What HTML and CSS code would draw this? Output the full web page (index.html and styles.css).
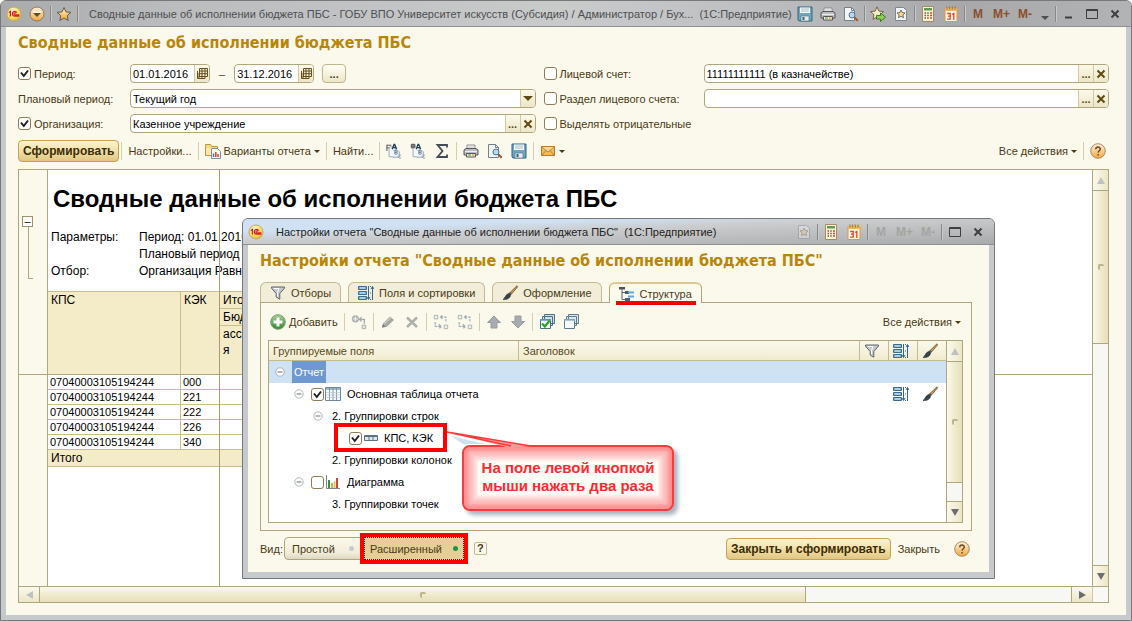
FILE: index.html
```html
<!DOCTYPE html>
<html lang="ru">
<head>
<meta charset="utf-8">
<title>Сводные данные об исполнении бюджета ПБС</title>
<link rel="stylesheet" href="styles.css">
</head>
<body>
<svg class="sprite" aria-hidden="true">
  <defs>
    <radialGradient id="g-yellow" cx=".4" cy=".3" r=".8"><stop offset="0" stop-color="#fffbd8"/><stop offset=".6" stop-color="#fbdc55"/><stop offset="1" stop-color="#dba42a"/></radialGradient>
    <linearGradient id="g-amber" x1="0" y1="0" x2="0" y2="1"><stop offset="0" stop-color="#fff3dc"/><stop offset="1" stop-color="#f0a63c"/></linearGradient>
    <linearGradient id="g-star" x1="0" y1="0" x2="0" y2="1"><stop offset="0" stop-color="#fff0c4"/><stop offset="1" stop-color="#f3a93f"/></linearGradient>
    <linearGradient id="g-green" x1="0" y1="0" x2="0" y2="1"><stop offset="0" stop-color="#a9cf98"/><stop offset="1" stop-color="#2f8a2c"/></linearGradient>
  </defs>
  <symbol id="i-1c" viewBox="0 0 16 16"><circle cx="8" cy="8" r="7" fill="url(#g-yellow)" stroke="#c9a868"/><path d="M2.8 6.6 4.4 5.5V10.6M10.800 6.600A2.400 2.400 0 1 0 8.800 10.200H13.400M9.800 7.400A1 1 0 1 0 8.800 8.800H13.400" fill="none" stroke="#d8232a" stroke-width="1.200"/></symbol>
  <symbol id="i-menu" viewBox="0 0 16 16"><circle cx="8" cy="8" r="7" fill="url(#g-amber)" stroke="#8d7a60"/><path d="M4 5.500h8v1.500H4z" fill="#fff"/><path d="M4 7h8L8 11z" fill="#6b4a1c"/></symbol>
  <symbol id="i-star" viewBox="0 0 16 16"><path d="M8 1.500l2 4.400 4.800.5-3.600 3.200 1 4.900L8 12l-4.200 2.500 1-4.900L1.200 6.400 6 5.900z" fill="url(#g-star)" stroke="#6c5a43" stroke-linejoin="round"/></symbol>
  <symbol id="i-staradd" viewBox="0 0 16 16"><path d="M7 .8l1.900 4.300 4.600.5-3.400 3.100 1 4.600L7 11l-4 2.300 1-4.600L.6 5.600 5.200 5.100z" fill="#f7ecc9" stroke="#75664c" stroke-linejoin="round"/><path d="M6.500 9.500h4V7l5 4.200-5 4.300V13h-4z" fill="#8fce5b" stroke="#3b7a26"/></symbol>
  <symbol id="i-starpage" viewBox="0 0 16 16"><path d="M2.500 1.500h8l3 3v10h-11z" fill="#eef3f7" stroke="#7b8791"/><path d="M8 4l1.200 2.600 2.800.3-2.100 1.900.6 2.900L8 10.300l-2.500 1.400.6-2.900L4 6.900l2.800-.3z" fill="#fbd98d" stroke="#5d5240" stroke-width=".8"/></symbol>
  <symbol id="i-save" viewBox="0 0 16 16"><path d="M1 1h14v14H2l-1-1z" fill="#6ea6bf" stroke="#35647d"/><path d="M3 1.500h10V7H3z" fill="#f4fafc"/><path d="M4 3h8M4 5h8" stroke="#a7bac5"/><path d="M4 10h8v5H4z" fill="#e5eaec" stroke="#4a7185" stroke-width=".6"/><path d="M5.500 11h2v3h-2z" fill="#35647d"/></symbol>
  <symbol id="i-print" viewBox="0 0 16 16"><path d="M4 2h8v5H4z" fill="#fff" stroke="#8b8b8b"/><path d="M5 4h6" stroke="#bbb"/><path d="M1 7l2-1.500h10L15 7v5H1z" fill="#b9bdc2" stroke="#54575b"/><path d="M2 8.500h12" stroke="#eee"/><path d="M3.500 10.500h9V14h-9z" fill="#f2eedd" stroke="#565656"/><path d="M5 12h3" stroke="#3c9c3c"/><path d="M9 12h2.500" stroke="#d58b22"/></symbol>
  <symbol id="i-preview" viewBox="0 0 16 16"><path d="M1.500 1.500h7l3 3v10h-10z" fill="#f3f6f8" stroke="#75818a"/><path d="M8.500 1.500v3h3" fill="none" stroke="#75818a"/><circle cx="9" cy="9" r="3" fill="#b9d8ee" stroke="#55788f"/><path d="M11.300 11.300l3.500 3.500" stroke="#9b5a35" stroke-width="2"/></symbol>
  <symbol id="i-calc" viewBox="0 0 16 16"><path d="M2.500.5h11v15h-11z" fill="#fcf3d7" stroke="#a58a63"/><path d="M4 2h8v2.500H4z" fill="#5f9a4f"/><path d="M4.500 7h1.500M7.200 7h1.500M4.500 9.500h1.500M7.200 9.500h1.500M4.500 12h1.500M7.200 12h1.500" stroke="#6b5a44" stroke-width="1.500"/><path d="M10 7h2M10 9.500h2M10 12h2" stroke="#d44b35" stroke-width="1.500"/></symbol>
  <symbol id="i-cal" viewBox="0 0 16 16"><path d="M2 2.500h12v13H2z" fill="#fdf4e4" stroke="#d99a4b"/><path d="M2 2h12v3H2z" fill="#efb460"/><path d="M4 .5v3M6.700.5v3M9.300.5v3M12 .5v3" stroke="#9a7134"/><path d="M4.200 7.500h3v5.700h-3M5 10.200h2.200M9.200 8.500l1.600-1v6.500" fill="none" stroke="#e0482c" stroke-width="1.300"/></symbol>
  <symbol id="i-grid" viewBox="0 0 12 12"><path d="M3.500.5h8v8h-8zM3.500 3h8M3.500 5.700h8M6 .5v8M9 .5v8M1.500 3v7.500H9M3 8.500v2M6 8.500v2M1.500 6h2M1.500 8.300H4M9 8.500v2" fill="none" stroke="#65501d"/></symbol>
  <symbol id="i-folder" viewBox="0 0 16 16"><path d="M.5 3.500V1.500h5l1.500 2h5.500v9H.5z" fill="#f6d983" stroke="#c09342"/><path d="M1 5h11v7H1z" fill="#fbe9ad"/><path d="M6.500 5.500h6l3 3v7h-9z" fill="#f9fbfd" stroke="#7992a8"/><path d="M8.500 14v-3.500" stroke="#4b77b5" stroke-width="1.500"/><path d="M10.800 14V9" stroke="#d14334" stroke-width="1.500"/><path d="M13 14v-3" stroke="#d14334" stroke-width="1.500"/></symbol>
  <symbol id="i-expand" viewBox="0 0 18 18"><path d="M1 2.500h5M1 5.500h3M1 2v7" fill="none" stroke="#444"/><path d="M3.500 4.500h7v11h-7z" fill="#f4f8fb" stroke="#8fa3b2"/><path d="M8.500 8.500h5l1.500 1.500v6H7.500" fill="#eaf1f7" stroke="#8fa3b2"/><path d="M7 7l2-5.500h.8L12 7M7.800 5.200h3.400" fill="none" stroke="#27405c" stroke-width="1.500"/><path d="M10 12.500V8.800h1.700a.9.900 0 0 1 0 1.800H10h1.900a1 1 0 0 1 0 2z" fill="none" stroke="#6d8496"/><path d="M17 14a1.800 1.800 0 1 0 0 2.500" fill="none" stroke="#8a9ba8"/></symbol>
  <symbol id="i-collapse" viewBox="0 0 18 18"><path d="M1.500 1.500h4v4h-4zM3.500 1v5M1 3.500h5" fill="none" stroke="#444"/><path d="M3.500 6.500v9h7v-11" fill="#f4f8fb" stroke="#8fa3b2"/><path d="M8.500 8.500h5l1.500 1.500v6H7.500" fill="#eaf1f7" stroke="#8fa3b2"/><path d="M7 7l2-5.500h.8L12 7M7.800 5.200h3.400" fill="none" stroke="#27405c" stroke-width="1.500"/><path d="M10 12.500V8.800h1.700a.9.900 0 0 1 0 1.800H10h1.900a1 1 0 0 1 0 2z" fill="none" stroke="#6d8496"/><path d="M17 14a1.800 1.800 0 1 0 0 2.500" fill="none" stroke="#8a9ba8"/></symbol>
  <symbol id="i-sum" viewBox="0 0 16 16"><path d="M13 4.500V2H3.500L8.500 8l-5 6H13v-2.500" fill="none" stroke="#454b57" stroke-width="1.800"/></symbol>
  <symbol id="i-mail" viewBox="0 0 16 16"><path d="M1.500 3.500h13v9h-13z" fill="#f5b95a" stroke="#bd7c23"/><path d="M1.500 3.500L8 9l6.500-5.500M1.500 12.500L6 7.500M14.500 12.500L10 7.500" fill="none" stroke="#c5822a"/><path d="M2.500 4L8 8.300 13.500 4z" fill="#fbd792"/></symbol>
  <symbol id="i-help" viewBox="0 0 16 16"><circle cx="8" cy="8" r="7.300" fill="url(#g-amber)" stroke="#a98c66"/><path d="M5.700 6.300C5.700 3.300 10.400 3.400 10.300 6.100 10.200 7.700 8.200 7.800 8.100 9.600M8.100 10.900v1.500" fill="none" stroke="#6b4a28" stroke-width="1.500"/></symbol>
  <symbol id="i-filter" viewBox="0 0 16 16"><path d="M1.500 2h13v1.200L9.800 8.500v5.700L6.200 12V8.500L1.500 3.200z" fill="#c3c8cd" stroke="#5e6469"/><path d="M4 3.500h5L7.500 7.500v4" fill="none" stroke="#fff"/></symbol>
  <symbol id="i-sort" viewBox="0 0 16 16"><path d="M.5 1.500h8v3h-8zM.5 6.500h8v3h-8zM.5 11.500h8v3h-8z" fill="#7fb0d6" stroke="#3f6c8e"/><path d="M2 3h5M2 8h5M2 13h5" stroke="#d6e8f4"/><path d="M10.500 1v13M9 12l1.500 2.500L12 12M14.500 15V2M13 4l1.500-2.500L16 4" fill="none" stroke="#33678f"/><path d="M12 1.500h1M12 14.500h1M12 8h1" stroke="#33678f"/></symbol>
  <symbol id="i-brush" viewBox="0 0 16 16"><path d="M15 .8L8 7.500l1.500 1.500L15.500 2z" fill="#c89d57" stroke="#6e5023" stroke-width=".8"/><path d="M8 7l2 2-1.800 1.500L6.500 8.800z" fill="#555"/><path d="M6.500 8.500l2 2C8 13 5 15 1 14.500 3.500 13 3 10 6.500 8.500z" fill="#37414a" stroke="#1f272e" stroke-width=".6"/></symbol>
  <symbol id="i-tree" viewBox="0 0 16 16"><path d="M0 1h6v2.500H0z" fill="#4a5159"/><path d="M3 3.500v10h3M3 6.500h3" fill="none" stroke="#56616b"/><path d="M6 5h4v3H6zM6 12h5v3H6z" fill="#4a5f70"/><path d="M9 6.500h6M9 10.500h6" stroke="#65a7d2" stroke-width="2"/></symbol>
  <symbol id="i-add" viewBox="0 0 16 16"><circle cx="8" cy="8" r="7.300" fill="url(#g-green)" stroke="#7c9a76"/><path d="M6.500 3.500h3v3h3v3h-3v3h-3v-3h-3v-3h3z" fill="#fff"/></symbol>
  <symbol id="i-group" viewBox="0 0 18 18"><circle cx="5" cy="5.500" r="4" fill="#b0b4b0"/><path d="M5 3v5M2.500 5.500h5" stroke="#eee" stroke-width="1.300"/><path d="M10 6h5v5M12 3.500L9.500 6 12 8.500" fill="none" stroke="#a4aaab" stroke-width="1.500"/><path d="M12.500 12.500h4v4h-4z" fill="#e3e4df" stroke="#a4a8a7"/></symbol>
  <symbol id="i-pen" viewBox="0 0 16 16"><path d="M2 13.500L3 9.500 10 2.500l4 3.500-7.500 7z" fill="#a4a69f"/><path d="M4 10l7-6.500" stroke="#c5c7c0" stroke-width="1.500"/><path d="M2 13.500l3.500-.7-2.500-2.500z" fill="#777"/></symbol>
  <symbol id="i-del" viewBox="0 0 16 16"><path d="M3 3.500l10 9.500M13 3.500L3 13" stroke="#aeb0ab" stroke-width="2.500"/></symbol>
  <symbol id="i-moveup" viewBox="0 0 18 18"><path d="M1.500 1.500h4v4h-4zM12.500 12.500h4v4h-4z" fill="#edf0ec" stroke="#a9aeae"/><path d="M8.500 3.500h6V9M10.500 1.500l-2.500 2 2.500 2M2.500 9v5h6M6.500 11.500l3 2.500-3 2.500" fill="none" stroke="#9cabb3" stroke-width="1.300" stroke-dasharray="3 1"/></symbol>
  <symbol id="i-up" viewBox="0 0 16 16"><path d="M8 2l6.500 6.500H11V14H5V8.500H1.500z" fill="#a8acb1" stroke="#989ca1"/></symbol>
  <symbol id="i-down" viewBox="0 0 16 16"><path d="M8 14L1.500 7.500H5V2h6v5.500h3.500z" fill="#a8acb1" stroke="#989ca1"/></symbol>
  <symbol id="i-checkall" viewBox="0 0 16 16"><path d="M5.500.5h10v9h-10zM3.500 2.500h10v9h-10z" fill="#cfe2ea" stroke="#4b7284"/><path d="M1.500 5.500h10v9h-10z" fill="#f2f8fa" stroke="#4b7284"/><path d="M1.500 5.500h10v1.500h-10z" fill="#89b3c6"/><path d="M3 9.500l2.800 3 5-6" fill="none" stroke="#31a02e" stroke-width="2.300"/></symbol>
  <symbol id="i-uncheckall" viewBox="0 0 16 16"><path d="M5.500.5h10v9h-10zM3.500 2.500h10v9h-10z" fill="#dbe8ef" stroke="#5e7c8c"/><path d="M1.500 5.500h10v9h-10z" fill="#f7fafb" stroke="#5e7c8c"/><path d="M1.500 5.500h10v1.500h-10z" fill="#a6c5d6"/></symbol>
  <symbol id="i-table" viewBox="0 0 16 16"><path d="M.5 1.500h15v13H.5z" fill="#f6f9fb" stroke="#70899a"/><path d="M1 2h14v2H1z" fill="#9db8c9"/><path d="M4.500 2v12M8 2v12M11.500 2v12" stroke="#70899a" stroke-width=".8"/><path d="M1 6.500h14M1 9h14M1 11.500h14" stroke="#b3c0ca" stroke-width=".6"/></symbol>
  <symbol id="i-fields" viewBox="0 0 14 8"><path d="M.5 1.500h13v5H.5z" fill="#dfe8ef" stroke="#5d7484"/><path d="M1 2h12v1H1z" fill="#5d7484"/><path d="M5 1v6M9 1v6" stroke="#5d7484"/></symbol>
  <symbol id="i-chart" viewBox="0 0 16 16"><path d="M1.500 1v13.500H15" fill="none" stroke="#7d8791"/><path d="M3 6h2v8H3z" fill="#3f8a4e"/><path d="M6 9h2v5H6z" fill="#b4c34c"/><path d="M8.500 7.500h2V14h-2z" fill="#e7c55f"/><path d="M11 4h2v10h-2z" fill="#c74a3f"/></symbol>
  <symbol id="i-minus" viewBox="0 0 10 10"><circle cx="5" cy="5" r="4.200" fill="#fff" stroke="#a9aeb1" stroke-width=".9"/><path d="M2.500 5h5" stroke="#6b7276"/></symbol>
  <symbol id="i-x" viewBox="0 0 10 10"><path d="M1.500 1.500l7 7M8.500 1.500l-7 7" stroke="currentColor" stroke-width="2"/></symbol>
  <symbol id="i-max" viewBox="0 0 12 12"><path d="M.5 1.500h11v9H.5zM.5 2.500h11" fill="none" stroke="currentColor"/></symbol>
  <symbol id="i-min" viewBox="0 0 12 12"><path d="M2 9.500h7" stroke="currentColor" stroke-width="2"/></symbol>
</svg>

<div class="window">
  <header class="titlebar">
    <button class="tb" aria-label="Меню 1С"><svg class="ic"><use href="#i-1c"/></svg></button>
    <button class="tb" aria-label="Главное меню"><svg class="ic"><use href="#i-menu"/></svg></button>
    <span class="tsep"></span>
    <button class="tb" aria-label="Избранное"><svg class="ic"><use href="#i-star"/></svg></button>
    <span class="tsep"></span>
    <span class="caption">Сводные данные об исполнении бюджета ПБС - ГОБУ ВПО Университет искусств (Субсидия) / Администратор / Бух...&nbsp; (1С:Предприятие)</span>
    <button class="tb" aria-label="Сохранить"><svg class="ic"><use href="#i-save"/></svg></button>
    <button class="tb" aria-label="Печать"><svg class="ic"><use href="#i-print"/></svg></button>
    <button class="tb" aria-label="Просмотр"><svg class="ic"><use href="#i-preview"/></svg></button>
    <span class="tsep"></span>
    <button class="tb" aria-label="Добавить в избранное"><svg class="ic"><use href="#i-staradd"/></svg></button>
    <button class="tb" aria-label="Ссылки"><svg class="ic"><use href="#i-starpage"/></svg></button>
    <span class="tsep"></span>
    <button class="tb" aria-label="Калькулятор"><svg class="ic"><use href="#i-calc"/></svg></button>
    <button class="tb" aria-label="Календарь"><svg class="ic"><use href="#i-cal"/></svg></button>
    <span class="tsep"></span>
    <button class="tb mem">M</button>
    <button class="tb mem">M+</button>
    <button class="tb mem">M-</button>
    <button class="tb more" aria-label="Ещё"><i class="caret wide"></i></button>
    <span class="tsep"></span>
    <button class="tb win" aria-label="Свернуть"><svg class="ic12"><use href="#i-min"/></svg></button>
    <button class="tb win" aria-label="Развернуть"><svg class="ic12"><use href="#i-max"/></svg></button>
    <button class="tb win" aria-label="Закрыть окно"><svg class="ic10"><use href="#i-x"/></svg></button>
  </header>

  <main class="content">
    <h1 class="heading">Сводные данные об исполнении бюджета ПБС</h1>

    <form class="params">
      <label class="lbl"><input type="checkbox" class="check" checked>Период:</label>
      <div class="period">
        <span class="field date"><input type="text" value="01.01.2016" aria-label="Начало периода"><button type="button" class="fb" aria-label="Выбрать дату начала"><svg class="ic12"><use href="#i-grid"/></svg></button></span>
        <span>–</span>
        <span class="field date"><input type="text" value="31.12.2016" aria-label="Конец периода"><button type="button" class="fb" aria-label="Выбрать дату конца"><svg class="ic12"><use href="#i-grid"/></svg></button></span>
        <button type="button" class="dots">...</button>
      </div>
      <label class="lbl second"><input type="checkbox" class="check">Лицевой счет:</label>
      <span class="field"><input type="text" value="11111111111 (в казначействе)" aria-label="Лицевой счет"><button type="button" class="fb">...</button><button type="button" class="fb" aria-label="Очистить"><svg class="ic10"><use href="#i-x"/></svg></button></span>

      <label class="lbl" for="plan">Плановый период:</label>
      <span class="field"><select id="plan"><option>Текущий год</option></select><span class="fb"><i class="caret big"></i></span></span>
      <label class="lbl second"><input type="checkbox" class="check">Раздел лицевого счета:</label>
      <span class="field"><input type="text" value="" aria-label="Раздел лицевого счета"><button type="button" class="fb">...</button><button type="button" class="fb" aria-label="Очистить"><svg class="ic10"><use href="#i-x"/></svg></button></span>

      <label class="lbl"><input type="checkbox" class="check" checked>Организация:</label>
      <span class="field"><input type="text" value="Казенное учреждение" aria-label="Организация"><button type="button" class="fb">...</button><button type="button" class="fb" aria-label="Очистить"><svg class="ic10"><use href="#i-x"/></svg></button></span>
      <label class="lbl second"><input type="checkbox" class="check">Выделять отрицательные</label>
    </form>

    <div class="toolbar">
      <button class="primary">Сформировать</button>
      <span class="sep"></span>
      <button class="cmd">Настройки...</button>
      <span class="sep"></span>
      <button class="cmd"><svg class="ic"><use href="#i-folder"/></svg>Варианты отчета<i class="caret"></i></button>
      <span class="sep"></span>
      <button class="cmd">Найти...</button>
      <span class="sep"></span>
      <button class="cmd" aria-label="Развернуть группы"><svg class="ic"><use href="#i-expand"/></svg></button>
      <button class="cmd" aria-label="Свернуть группы"><svg class="ic"><use href="#i-collapse"/></svg></button>
      <button class="cmd" aria-label="Сумма"><svg class="ic"><use href="#i-sum"/></svg></button>
      <span class="sep"></span>
      <button class="cmd" aria-label="Печать отчета"><svg class="ic"><use href="#i-print"/></svg></button>
      <button class="cmd" aria-label="Предварительный просмотр"><svg class="ic"><use href="#i-preview"/></svg></button>
      <button class="cmd" aria-label="Сохранить отчет"><svg class="ic"><use href="#i-save"/></svg></button>
      <span class="sep"></span>
      <button class="cmd" aria-label="Отправить"><svg class="ic"><use href="#i-mail"/></svg><i class="caret"></i></button>
      <button class="cmd push">Все действия<i class="caret"></i></button>
      <span class="sep"></span>
      <button class="cmd" aria-label="Справка"><svg class="ic"><use href="#i-help"/></svg></button>
    </div>

    <section class="sheet">
      <div class="view">
        <div class="pane frozen">
          <div class="gutter"><button class="fold" aria-label="Свернуть группу">–</button><span class="bracket"></span></div>
          <div class="cells">
            <h2 class="report">Сводные данные об исполнении бюджета ПБС</h2>
            <dl class="info">
              <dt>Параметры:</dt><dd>Период: 01.01.2016</dd>
              <dd class="cont">Плановый период</dd>
              <dt>Отбор:</dt><dd>Организация Равно</dd>
            </dl>
            <table class="data head">
              <colgroup><col class="c1"><col class="c2"><col class="c3"></colgroup>
              <tr><th rowspan="3">КПС</th><th rowspan="3">КЭК</th><th>Итого</th></tr>
              <tr><th>Бюджетные</th></tr>
              <tr><th class="tall">ассиг<br>я</th></tr>
            </table>
          </div>
        </div>
        <div class="pane rest">
          <div class="gutter"></div>
          <div class="cells">
            <table class="data">
              <colgroup><col class="c1"><col class="c2"><col class="c3"></colgroup>
              <tr><td>07040003105194244</td><td>000</td><td></td></tr>
              <tr><td>07040003105194244</td><td>221</td><td></td></tr>
              <tr><td>07040003105194244</td><td>222</td><td></td></tr>
              <tr><td>07040003105194244</td><td>226</td><td></td></tr>
              <tr><td>07040003105194244</td><td>340</td><td></td></tr>
              <tr><th colspan="2">Итого</th><th></th></tr>
            </table>
          </div>
        </div>
        <span class="freeze"></span>
      </div>
      <div class="vscroll">
        <button class="arrow" aria-label="Вверх"><i class="tri up off"></i></button>
        <span class="thumb tv"></span><span class="track kv"></span>
        <button class="arrow" aria-label="Вниз"><i class="tri down"></i></button>
      </div>
      <div class="hscroll">
        <button class="arrow" aria-label="Влево"><i class="tri left off"></i></button>
        <span class="thumb th"></span><span class="track kh"></span>
        <button class="arrow" aria-label="Вправо"><i class="tri right"></i></button>
      </div>
      <span class="corner"></span>
    </section>
  </main>
</div>

<div class="dialog" role="dialog" aria-labelledby="dlg-title">
  <header class="titlebar">
    <button class="tb" aria-label="Меню 1С"><svg class="ic"><use href="#i-1c"/></svg></button>
    <span class="caption">Настройки отчета "Сводные данные об исполнении бюджета ПБС"&nbsp; (1С:Предприятие)</span>
    <button class="tb faded" aria-label="Ссылки"><svg class="ic"><use href="#i-starpage"/></svg></button>
    <span class="tsep"></span>
    <button class="tb" aria-label="Калькулятор"><svg class="ic"><use href="#i-calc"/></svg></button>
    <button class="tb" aria-label="Календарь"><svg class="ic"><use href="#i-cal"/></svg></button>
    <span class="tsep"></span>
    <button class="tb mem">M</button>
    <button class="tb mem">M+</button>
    <button class="tb mem">M-</button>
    <span class="tsep"></span>
    <button class="tb win" aria-label="Развернуть"><svg class="ic12"><use href="#i-max"/></svg></button>
    <button class="tb win" aria-label="Закрыть окно"><svg class="ic10"><use href="#i-x"/></svg></button>
  </header>
  <div class="dbody">
    <h2 class="heading" id="dlg-title">Настройки отчета "Сводные данные об исполнении бюджета ПБС"</h2>
    <nav class="tabs">
      <button class="tab"><svg class="ic"><use href="#i-filter"/></svg>Отборы</button>
      <button class="tab"><svg class="ic"><use href="#i-sort"/></svg>Поля и сортировки</button>
      <button class="tab"><svg class="ic"><use href="#i-brush"/></svg>Оформление</button>
      <button class="tab active"><svg class="ic"><use href="#i-tree"/></svg>Структура</button>
    </nav>
    <div class="panel">
      <div class="toolbar">
        <button class="cmd"><svg class="ic"><use href="#i-add"/></svg>Добавить</button>
        <span class="sep"></span>
        <button class="cmd" aria-label="Сгруппировать"><svg class="ic"><use href="#i-group"/></svg></button>
        <span class="sep"></span>
        <button class="cmd" aria-label="Изменить"><svg class="ic"><use href="#i-pen"/></svg></button>
        <button class="cmd" aria-label="Удалить"><svg class="ic"><use href="#i-del"/></svg></button>
        <span class="sep"></span>
        <button class="cmd" aria-label="Поднять уровень"><svg class="ic"><use href="#i-moveup"/></svg></button>
        <button class="cmd" aria-label="Опустить уровень"><svg class="ic"><use href="#i-moveup"/></svg></button>
        <span class="sep"></span>
        <button class="cmd" aria-label="Переместить вверх"><svg class="ic"><use href="#i-up"/></svg></button>
        <button class="cmd" aria-label="Переместить вниз"><svg class="ic"><use href="#i-down"/></svg></button>
        <span class="sep"></span>
        <button class="cmd" aria-label="Отметить все"><svg class="ic"><use href="#i-checkall"/></svg></button>
        <button class="cmd" aria-label="Снять отметки"><svg class="ic"><use href="#i-uncheckall"/></svg></button>
        <button class="cmd push">Все действия<i class="caret"></i></button>
      </div>
      <div class="treebox">
        <div class="treeview">
          <table class="tree">
            <colgroup><col class="t1"><col class="t2"><col class="t3"><col class="t3"><col class="t3"></colgroup>
            <thead><tr><th>Группируемые поля</th><th>Заголовок</th><th><svg class="ic"><use href="#i-filter"/></svg></th><th><svg class="ic"><use href="#i-sort"/></svg></th><th><svg class="ic"><use href="#i-brush"/></svg></th></tr></thead>
            <tbody>
              <tr class="sel"><td><div class="node l0"><svg class="ic10"><use href="#i-minus"/></svg><span class="mark">Отчет</span></div></td><td></td><td></td><td></td><td></td></tr>
              <tr><td><div class="node l1"><svg class="ic10"><use href="#i-minus"/></svg><label class="item"><input type="checkbox" class="check" checked><svg class="ic"><use href="#i-table"/></svg><span>Основная таблица отчета</span></label></div></td><td></td><td></td><td class="c"><svg class="ic"><use href="#i-sort"/></svg></td><td class="c"><svg class="ic"><use href="#i-brush"/></svg></td></tr>
              <tr><td><div class="node l2"><svg class="ic10"><use href="#i-minus"/></svg><span>2. Группировки строк</span></div></td><td></td><td></td><td></td><td></td></tr>
              <tr><td><div class="node l3"><label class="item framed"><input type="checkbox" class="check" checked><svg class="icf"><use href="#i-fields"/></svg><span>КПС, КЭК</span></label></div></td><td></td><td></td><td></td><td></td></tr>
              <tr><td><div class="node l4"><span>2. Группировки колонок</span></div></td><td></td><td></td><td></td><td></td></tr>
              <tr><td><div class="node l1"><svg class="ic10"><use href="#i-minus"/></svg><label class="item"><input type="checkbox" class="check"><svg class="ic"><use href="#i-chart"/></svg><span>Диаграмма</span></label></div></td><td></td><td></td><td></td><td></td></tr>
              <tr><td><div class="node l4"><span>3. Группировки точек</span></div></td><td></td><td></td><td></td><td></td></tr>
              <tr><td><div class="node l4"><span>3. Группировки серий</span></div></td><td></td><td></td><td></td><td></td></tr>
            </tbody>
          </table>
        </div>
        <div class="vscroll">
          <button class="arrow" aria-label="Вверх"><i class="tri up off"></i></button>
          <span class="thumb dv"></span><span class="track dk"></span>
          <button class="arrow" aria-label="Вниз"><i class="tri down"></i></button>
        </div>
      </div>
    </div>
    <footer class="dfoot">
      <span>Вид:</span>
      <button class="mode">Простой<i class="dot"></i></button>
      <button class="mode on">Расширенный<i class="dot"></i></button>
      <button class="hint">?</button>
      <button class="primary push">Закрыть и сформировать</button>
      <button class="cmd">Закрыть</button>
      <button class="cmd last" aria-label="Справка"><svg class="ic"><use href="#i-help"/></svg></button>
    </footer>
  </div>
  <div class="callout">
    <svg class="tail" viewBox="0 0 100 20"><path d="M6 6L40 14H18z" fill="#cfe0f2"/><path d="M2 2L86 16L66 18z" fill="#fd9a9a"/><path d="M66 16L2 2L86 16" fill="none" stroke="#fb3b3b" stroke-width="1.500"/></svg>
    <p class="bubble">На поле левой кнопкой мыши нажать два раза</p>
  </div>
</div>
</body>
</html>
```
FILE: styles.css
```css
* { box-sizing: border-box; }
body { margin: 0; background: #fff; color: #4a3a14; font: 11px/14px "Liberation Sans", Arial, sans-serif; }
button, input, select { font: inherit; color: inherit; margin: 0; padding: 0; border: 0; background: none; }
h1, h2, p, dl, dd { margin: 0; }
svg { display: block; flex: none; }
.sprite { position: absolute; width: 0; height: 0; }
.ic { width: 16px; height: 16px; }
.ic12 { width: 12px; height: 12px; }
.ic10 { width: 10px; height: 10px; }
.icf { width: 14px; height: 8px; }

.window { display: flex; flex-direction: column; min-height: 100vh; border: 1px solid #77787a; border-radius: 6px 6px 0 0; padding: 0 5px 5px; background: #c6cacd; }
.titlebar { display: flex; align-items: center; height: 26px; margin: 0 -5px; padding: 0 8px 0 5px; gap: 7px; border-radius: 5px 5px 0 0; color: #4d4f52; border-bottom: 1px solid #8f9092; background: linear-gradient(90deg, #a9aaac, #bbbcbe 15%, #c9caca 50%, #bfc0c2 65%, #a8a8aa 85%, #b2b3b5); }
.tb { display: flex; align-items: center; justify-content: center; flex: none; min-width: 16px; height: 18px; }
.tsep { flex: none; width: 1px; height: 16px; margin: 0 -2px; background: #87888a; box-shadow: 1px 0 #c9c9c9; }
.caption { flex: 1; min-width: 0; white-space: nowrap; padding-left: 6px; }
.mem { font-weight: bold; font-size: 12px; color: #8a4f2c; }
.more { min-width: 10px; align-items: flex-end; padding-bottom: 3px; }
.win { color: #3e3f41; }
.caret { display: inline-block; width: 0; height: 0; border: 3px solid transparent; border-top-color: currentColor; border-bottom: 0; }
.caret.big { border-width: 5px 5px 0; }
.caret.wide { border-width: 4px 4px 0; }

.content { flex: 1; display: flex; flex-direction: column; padding: 4px 17px 12px 12px; background: #fbf9ec; }
.heading { font: bold 16px/24px "DejaVu Sans Condensed", "Noto Sans", Tahoma, sans-serif; color: #b8860b; white-space: nowrap; }
.params { display: grid; grid-template-columns: 112px 1fr 168px 1fr; align-items: center; row-gap: 6px; margin-top: 9px; }
.lbl { display: flex; align-items: center; gap: 3px; white-space: nowrap; }
.second { padding-left: 8px; }
.check { appearance: none; flex: none; width: 13px; height: 13px; border: 1px solid #8c7f55; border-radius: 3px; background: #fff; }
.check:checked { background: #fff url("data:image/svg+xml,%3Csvg xmlns='http://www.w3.org/2000/svg' viewBox='0 0 11 11'%3E%3Cpath d='M2 4.500L4.800 8 9 2.500' fill='none' stroke='%23222' stroke-width='2'/%3E%3C/svg%3E"); }
.field { display: flex; height: 19px; border: 1px solid #b0a67c; border-radius: 4px; overflow: hidden; background: #fff; color: #000; min-width: 0; }
.field input, .field select { flex: 1; min-width: 0; width: 100%; padding: 0 2px; outline: 0; appearance: none; color: #000; }
.fb { display: flex; align-items: center; justify-content: center; flex: none; width: 15px; border-left: 1px solid #d3c999; background: linear-gradient(#fbf9ec, #ece6c8); color: #5f4a12; font-weight: bold; line-height: 14px; }
.period { display: flex; align-items: center; gap: 9px; }
.date { width: 80px; }
.dots { width: 24px; height: 19px; margin-left: -1px; border: 1px solid #bfb68c; border-radius: 4px; background: linear-gradient(#fffef6, #ece6c8); font-weight: bold; }

.toolbar { display: flex; align-items: center; gap: 8px; }
.content > .toolbar { height: 22px; margin: 7px 0; padding-right: 3px; }
.primary { height: 22px; padding: 0 4px; border: 1px solid #c9a24c; border-radius: 4px; background: linear-gradient(#fdf3cf, #eedb9f 60%, #e0c684); font: bold 12px/14px "Liberation Sans", Arial, sans-serif; color: #3d2c05; white-space: nowrap; }
.cmd { display: flex; align-items: center; gap: 3px; white-space: nowrap; flex: none; }
.sep { width: 1px; height: 18px; margin: 0 -2px; background: #d5ceae; flex: none; }
.primary + .sep { margin-left: -6px; }
.push { margin-left: auto; }

.sheet { flex: 1; display: grid; grid-template-columns: 1fr 16px; grid-template-rows: 1fr 16px; border: 1px solid #b0a67c; background: #fff; }
.view { position: relative; display: flex; flex-direction: column; min-width: 0; overflow: hidden; color: #000; }
.pane { display: flex; }
.frozen { border-bottom: 1px solid #b0a67c; }
.rest { flex: 1; }
.gutter { flex: none; width: 29px; border-right: 1px solid #b0a67c; background: #fbf9ec; display: flex; flex-direction: column; align-items: center; }
.frozen .gutter { padding-top: 46px; padding-right: 11px; }
.fold { width: 11px; height: 11px; border: 1px solid #9c9270; background: #fff; line-height: 9px; display: flex; align-items: center; justify-content: center; }
.bracket { width: 5px; height: 52px; margin-left: 5px; border-left: 1px solid #b0a67c; border-bottom: 1px solid #b0a67c; }
.cells { flex: 1; min-width: 0; }
.report { padding: 15px 5px 0; font: bold 24px/28px "Liberation Sans", Arial, sans-serif; white-space: nowrap; }
.info { display: grid; grid-template-columns: 88px 1fr; padding: 16px 3px 0; font-size: 12px; line-height: 17px; white-space: nowrap; }
.cont { grid-column: 2; }
.data { table-layout: fixed; width: 300px; border-collapse: separate; border-spacing: 0; }
.c1 { width: 133px; } .c2 { width: 39px; } .c3 { width: 128px; }
.data td { height: 15px; padding: 0 2px; border-right: 1px solid #c9be8d; border-bottom: 1px solid #c9be8d; line-height: 14px; }
.data th { height: 17px; padding: 0 3px; text-align: left; vertical-align: top; font-weight: normal; font-size: 12px; line-height: 16px; background: #f4ebc8; border-right: 1px solid #c9be8d; border-bottom: 1px solid #c9be8d; }
.head { margin-top: 11px; border-top: 1px solid #c9be8d; }
.head th[rowspan], .head .tall { border-bottom: 0; }
.data .tall { height: 48px; }
.freeze { position: absolute; left: 200px; top: 0; bottom: 0; width: 1px; background: #a89d72; }

.vscroll { display: flex; flex-direction: column; border-left: 1px solid #b0a67c; }
.hscroll { display: flex; border-top: 1px solid #b0a67c; }
.corner { border-top: 1px solid #b0a67c; border-left: 1px solid #d3c999; background: #f8f8f4; }
.arrow { display: flex; align-items: center; justify-content: center; flex: none; background: linear-gradient(90deg, #fbf9ec, #ece6c8); }
.vscroll .arrow { height: 20px; }
.hscroll .arrow { width: 20px; background: linear-gradient(#fbf9ec, #ece6c8); }
.thumb { border: 0 solid #b0a67c; display: flex; align-items: center; justify-content: center; }
.thumb::after { content: ""; width: 4px; height: 4px; border-top: 2px solid #bdb48e; border-left: 2px solid #bdb48e; border-radius: 2px; }
.vscroll .thumb { border-width: 1px 0; background: linear-gradient(90deg, #fbf9ec, #f0ebcf 50%, #e7dfb9); }
.hscroll .thumb { border-width: 0 1px; background: linear-gradient(#fbf9ec, #f0ebcf 50%, #e7dfb9); }
.track { background: #f7f8f4; }
.vscroll .track { border-bottom: 1px solid #b0a67c; }
.hscroll .track { border-right: 1px solid #b0a67c; }
.tv { flex: 153; } .kv { flex: 222; }
.th { flex: 766; } .kh { flex: 265; }
.dv { flex: 122; } .dk { flex: 18; }
.tri { width: 0; height: 0; border: 4px solid transparent; }
.up { border-bottom: 7px solid #6d6d6d; border-top: 0; }
.down { border-top: 7px solid #6d6d6d; border-bottom: 0; }
.left { border-right: 7px solid #6d6d6d; border-left: 0; }
.right { border-left: 7px solid #6d6d6d; border-right: 0; }
.up.off { border-bottom-color: #bfc0c2; }
.left.off { border-right-color: #bfc0c2; }

.dialog { position: absolute; left: 242px; top: 218px; width: 753px; border: 1px solid #77787a; border-radius: 6px 6px 0 0; padding: 0 5px 6px; background: #c6cacd; }
.dialog .titlebar { color: #222; background: linear-gradient(178deg, #cfe1f3 0, #cfe1f3 25%, #cbcccd 45%, #a9aaac); }
.dialog .caption { padding-left: 5px; }
.dialog .mem { color: #a5a5a0; }
.faded { opacity: .4; }
.dbody { padding: 4px 17px 12px 12px; background: #fbf9ec; }
.tabs { display: flex; align-items: flex-end; gap: 7px; margin-top: 9px; }
.tab { display: flex; align-items: center; gap: 5px; height: 20px; padding: 0 9px; border: 1px solid #c3ba92; border-bottom: 0; border-radius: 6px 6px 0 0; background: #f1edd9; white-space: nowrap; }
.tab.active { position: relative; height: 21px; margin-bottom: -1px; background: #fbf9ec; border-color: #b0a67c; border-top: 2px solid #dcc88e; z-index: 1; }
.active::after { content: ""; position: absolute; left: 6px; right: 5px; bottom: -2px; height: 4px; background: #f00000; }
.panel { padding: 8px 8px 7px 7px; border: 1px solid #b0a67c; }
.panel .toolbar { height: 22px; padding: 0 2px; }
.treebox { display: flex; height: 183px; margin-top: 7px; border: 1px solid #b0a67c; background: #fff; }
.treebox .vscroll { flex: none; width: 16px; }
.treeview { flex: 1; min-width: 0; overflow: hidden; }
.tree { width: 100%; table-layout: fixed; border-collapse: separate; border-spacing: 0; color: #000; }
.t1 { width: 249px; } .t3 { width: 29px; }
.tree th { height: 20px; padding: 0 4px; text-align: left; font-weight: normal; color: #5a4a20; background: linear-gradient(#fbf9ec, #f0ebcf); border-bottom: 1px solid #c3ba92; }
.tree th + th { border-left: 1px solid #c3ba92; }
.tree td { height: 22px; padding: 0; white-space: nowrap; }
.tree td.c { padding-left: 5px; }
.sel { background: #cfe2f4; }
.node { display: flex; align-items: center; gap: 7px; height: 22px; }
.l0 { padding-left: 6px; } .l1 { padding-left: 25px; } .l2 { padding-left: 44px; } .l3 { padding-left: 80px; } .l4 { padding-left: 63px; }
.l2 { gap: 9px; }
.mark { padding: 4px 2px; background: #6f98d0; color: #fff; }
.item { display: flex; align-items: center; gap: 2px; position: relative; }
.item .ic { margin-left: -1px; }
.item span { margin-left: 4px; }
.framed::before { content: ""; position: absolute; inset: -8px -14px -7px -15px; border: 4px solid #f00; }
.dfoot { display: flex; align-items: center; margin-top: 6px; height: 23px; }
.mode { position: relative; display: flex; align-items: center; justify-content: space-between; width: 78px; height: 23px; padding: 0 7px; margin-left: 1px; border: 1px solid #b0a67c; border-radius: 4px 0 0 4px; background: linear-gradient(#fbf9ec, #f1edd9 70%, #ddd8c2); }
.mode.on { width: 100px; margin-left: 2px; padding: 0 5px; border: 1px dotted #222; border-radius: 0; background: #e6cf97; }
.mode.on::before { content: ""; position: absolute; inset: -5px; border: 4px solid #f00; }
.dot { width: 5px; height: 5px; border-radius: 3px; background: #c5ccd2; }
.on .dot { background: #12994a; }
.hint { width: 13px; height: 13px; margin-left: 10px; border: 1px solid #c3ba92; border-radius: 2px; line-height: 11px; font-weight: bold; }
.dfoot .cmd { margin-left: 7px; }
.dfoot .last { margin: 0 2px 0 14px; }
.callout { position: absolute; left: 219px; top: 226px; }
.tail { position: absolute; left: -17px; top: -15px; width: 100px; height: 20px; z-index: 1; }
.bubble { width: 212px; padding: 12px 12px 14px; border: 2px solid #fb3b3b; border-radius: 8px; background: #fffdf6; box-shadow: inset 0 0 3px 4px #fd9292, inset 0 0 3px 9px #fdbcbc, inset 0 0 3px 13px #fdd9d9, 4px 4px 4px #a9b4c0; text-align: center; font-size: 15px; line-height: 18px; font-weight: bold; color: #fb2a33; }
```
